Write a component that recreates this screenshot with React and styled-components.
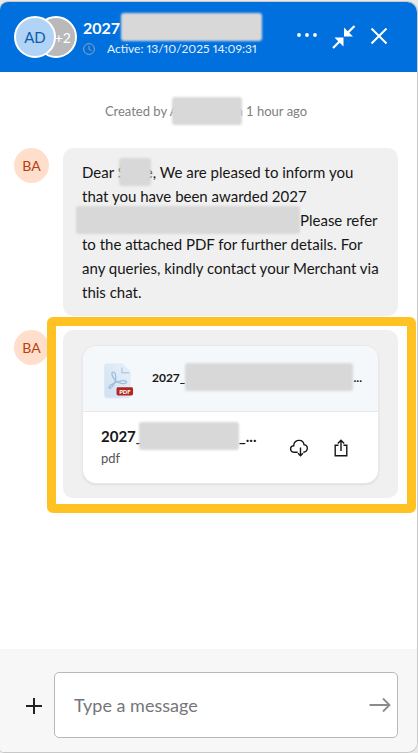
import React from 'react'
import { createGlobalStyle, styled } from 'styled-components'

const GlobalStyle = createGlobalStyle`
  * {
    box-sizing: border-box;
  }
  body {
    margin: 0;
    background: #e9e9e9;
    font-family: Lato, "Noto Sans", sans-serif;
    color: #161616;
  }
  button {
    display: flex;
    align-items: center;
    justify-content: center;
    padding: 0;
    border: 0;
    background: none;
    color: inherit;
    cursor: pointer;
  }
`;
const Panel = styled.main`
  display: flex;
  flex-direction: column;
  min-height: calc(100vh - 3px);
  margin: 2px 1px 1px 0;
  background: #fff;
  border-radius: 8px 10px 10px 4px;
  overflow: hidden;
  box-shadow: 0 0 0 1px #c8c8c8;
`;
const Header = styled.header`
  display: flex;
  align-items: center;
  height: 70px;
  padding: 0 29px 0 14px;
  background: #0070de;
  color: #fff;
`;
const AvatarGroup = styled.div`
  display: flex;
  margin-right: 6px;
`;
const GroupAvatar = styled.div`
  display: flex;
  align-items: center;
  justify-content: center;
  width: 42px;
  height: 42px;
  border: 2px solid #fff;
  border-radius: 50%;
  background: #b1d3f6;
  color: #0d5cab;
  font-size: 15px;
  z-index: 1;
`;
const MoreAvatar = styled(GroupAvatar)`
  justify-content: flex-end;
  margin-left: -21px;
  padding-right: 4px;
  background: #b9b9b9;
  color: #fff;
  font-size: 14px;
  z-index: 0;
`;
const HeaderText = styled.div`
  flex: 1;
  min-width: 0;
  padding-top: 3px;
  white-space: nowrap;
`;
const Title = styled.h1`
  margin: 0;
  font-size: 16px;
  line-height: 20px;
`;
const Status = styled.div`
  display: flex;
  align-items: center;
  gap: 12px;
  color: #e6f1fc;
  font-size: 12px;
  font-variant-numeric: proportional-nums;
  line-height: 20px;
  svg {
    color: #8fa3b8;
  }
`;
const HeaderActions = styled.div`
  display: flex;
  align-items: center;
  gap: 14px;
`;
const Redacted = styled.span`
  display: inline-block;
  width: ${({ $width }) => $width}px;
  height: 28px;
  margin: -6px ${({ $after }) => $after || 0}px -2px ${({ $before }) => $before || 0}px;
  border-radius: 3px;
  background: #d8d8d8;
  vertical-align: middle;
  filter: blur(1px);
`;
const Messages = styled.section`
  flex: 1;
  padding: 28px 19px 28px 14px;
`;
const Created = styled.p`
  margin: 0 0 25px;
  padding: 0 8px;
  color: #808080;
  font-size: 13px;
  line-height: 22px;
  text-align: center;
`;
const Message = styled.article`
  display: flex;
  align-items: flex-start;
  gap: 14px;
  margin-bottom: 14px;
`;
const Avatar = styled.div`
  display: flex;
  align-items: center;
  justify-content: center;
  flex: none;
  width: 35px;
  height: 35px;
  border-radius: 50%;
  background: #ffdfcc;
  color: #b8400e;
  font-size: 14px;
`;
const Bubble = styled.div`
  position: relative;
  flex: 1;
  min-width: 0;
  padding: ${({ $file }) => ($file ? '15px 19px 14px' : '12px 17px 12px 19px')};
  border-radius: 10px;
  background: #f0f0f0;
  font-size: 15px;
  line-height: 24px;
`;
const Highlight = styled.div`
  position: absolute;
  inset: -13px -18px -15px -16px;
  border: 9px solid #ffc222;
  border-radius: 6px;
  pointer-events: none;
`;
const FileCard = styled.div`
  border: 1px solid #e6e8ea;
  border-radius: 14px;
  background: #fff;
  overflow: hidden;
  box-shadow: 0 1px 2px rgba(0, 0, 0, 0.08);
`;
const FilePreview = styled.div`
  display: flex;
  align-items: center;
  gap: 18px;
  height: 66px;
  padding: 4px 16px 0 21px;
  border-bottom: 1px solid #e6e8ea;
  background: #f4f8fb;
  font-size: 12px;
  font-weight: bold;
  line-height: 20px;
  white-space: nowrap;
`;
const PreviewName = styled.div`
  padding-bottom: 4px;
`;
const FileRow = styled.div`
  display: flex;
  align-items: center;
  height: 71px;
  padding: 0 27px 0 18px;
`;
const FileInfo = styled.div`
  flex: 1;
  min-width: 0;
  padding-bottom: 4px;
  white-space: nowrap;
`;
const FileName = styled.div`
  font-size: 15px;
  font-weight: bold;
  line-height: 24px;
`;
const FileType = styled.div`
  color: #555;
  font-size: 13px;
  line-height: 20px;
`;
const FileActions = styled.div`
  display: flex;
  gap: 22px;
`;
const Composer = styled.form`
  display: flex;
  align-items: center;
  gap: 10px;
  padding: 23px 19px 14px 24px;
  background: #f7f7f7;
`;
const InputBox = styled.div`
  display: flex;
  align-items: center;
  flex: 1;
  min-width: 0;
  height: 66px;
  padding: 0 6px 0 19px;
  border: 1px solid #b8b8b8;
  border-radius: 5px;
  background: #fff;
  color: #8c8c8c;
`;
const MessageInput = styled.input`
  flex: 1;
  min-width: 0;
  padding: 0;
  border: 0;
  outline: 0;
  background: none;
  font: inherit;
  font-size: 18px;
  line-height: 24px;
  &::placeholder {
    color: #747678;
    opacity: 1;
  }
`;

const ClockIcon = () => (
  <svg width="12" height="12" viewBox="0 0 12 12" fill="none" stroke="currentColor">
    <circle cx="6" cy="6" r="5.4" />
    <path d="M6 2.8V6.4L8.4 7.6" />
  </svg>
)
const DotsIcon = () => (
  <svg width="22" height="22" viewBox="0 0 22 22" fill="currentColor">
    <circle cx="3" cy="9" r="1.9" />
    <circle cx="11" cy="9" r="1.9" />
    <circle cx="19" cy="9" r="1.9" />
  </svg>
)
const CollapseIcon = () => (
  <svg width="24" height="24" viewBox="0 0 24 24" fill="currentColor" stroke="currentColor">
    <path d="M22.5 1L15 8.5M1 23L8.5 15.5" fill="none" strokeWidth="2.2" />
    <path d="M12 2.5V11.5H21ZM11.5 21.5V12.5H2.5Z" stroke="none" />
  </svg>
)
const CloseIcon = () => (
  <svg width="18" height="18" viewBox="0 0 18 18" fill="none" stroke="currentColor" strokeWidth="2">
    <path d="M1.5 0.5L16.5 15.5M16.5 0.5L1.5 15.5" />
  </svg>
)
const PdfIcon = () => (
  <svg width="31" height="36" viewBox="0 0 31 36">
    <defs>
      <linearGradient id="sheet" x1="0" y1="1" x2="1" y2="0">
        <stop offset="0" stopColor="#cfe0f1" />
        <stop offset="1" stopColor="#e8f1fa" />
      </linearGradient>
    </defs>
    <path d="M3 0.5H19L27 8.5V33Q27 35.5 24.5 35.5H3Q0.5 35.5 0.5 33V3Q0.5 0.5 3 0.5Z" fill="url(#sheet)" stroke="#dce9f5" />
    <path d="M18.5 4V9.5H26" fill="none" stroke="#b3cde6" strokeWidth="1.4" />
    <path
      d="M9 9C7 10 9 14.5 12 17.5C15 20.5 21 21.5 23 19.8C24.8 17.8 20 17 15.5 18.5C10 20 5 22.8 5.2 25.2C6 27.5 10.5 22.5 11.8 17.5C12.9 13 11.5 8 9 9Z"
      fill="none"
      stroke="#9dbddb"
      strokeWidth="1.3"
    />
    <rect x="13" y="24.5" width="17" height="8.5" rx="1.5" fill="#b3261e" />
    <text x="21.5" y="31" fill="#fff" fontFamily="Lato, sans-serif" fontSize="6" fontWeight="900" textAnchor="middle">PDF</text>
  </svg>
)
const CloudIcon = () => (
  <svg width="20" height="20" viewBox="0 0 20 20" fill="none" stroke="currentColor" strokeWidth="1.4">
    <path d="M8.7 14.3H5.4C0.6 14.2 0.4 8.4 4.7 7.8C5 1.2 14 0.4 15 6.6C19.6 7.4 19.4 13.6 14.3 14.3" />
    <path d="M11.5 9.5V17.5M9 15.2L11.5 17.7L14 15.2" />
  </svg>
)
const ShareIcon = () => (
  <svg width="20" height="20" viewBox="0 0 20 20" fill="none" stroke="currentColor" strokeWidth="1.4">
    <path d="M7.5 7.2H4.2V17.8H15.8V7.2H12.5" />
    <path d="M10 13V2.5M6.8 5.4L10 2.2L13.2 5.4" />
  </svg>
)
const PlusIcon = () => (
  <svg width="20" height="20" viewBox="0 0 20 20" fill="none" stroke="#222" strokeWidth="2">
    <path d="M10 3V19M2 11H18" />
  </svg>
)
const SendIcon = () => (
  <svg width="22" height="16" viewBox="0 0 22 16" fill="none" stroke="currentColor" strokeWidth="1.8">
    <path d="M0.5 8H20.5M14 1.5L20.5 8L14 14.5" />
  </svg>
)

const App = () => {
  return (
    <>
      <GlobalStyle />
      <Panel>
        <Header>
          <AvatarGroup>
            <GroupAvatar>AD</GroupAvatar>
            <MoreAvatar>+2</MoreAvatar>
          </AvatarGroup>
          <HeaderText>
            <Title>2027 <Redacted $width={141} $before={-3} /></Title>
            <Status><ClockIcon />Active: 13/10/2025 14:09:31</Status>
          </HeaderText>
          <HeaderActions>
            <button type="button" aria-label="More options"><DotsIcon /></button>
            <button type="button" aria-label="Collapse"><CollapseIcon /></button>
            <button type="button" aria-label="Close"><CloseIcon /></button>
          </HeaderActions>
        </Header>
        <Messages>
          <Created>Created by A<Redacted $width={70} $before={-7} $after={-6} />n 1 hour ago</Created>
          <Message>
            <Avatar>BA</Avatar>
            <Bubble>
              Dear S<Redacted $width={32} $before={-7} $after={-6} />e, We are pleased to inform you
              that you have been awarded 2027
              {' '}<Redacted $width={224} $before={-6} />Please refer
              to the attached PDF for further details. For
              any queries, kindly contact your Merchant via
              this chat.
            </Bubble>
          </Message>
          <Message>
            <Avatar>BA</Avatar>
            <Bubble $file>
              <FileCard>
                <FilePreview>
                  <PdfIcon />
                  <PreviewName>2027_<Redacted $width={168} />...</PreviewName>
                </FilePreview>
                <FileRow>
                  <FileInfo>
                    <FileName>2027_<Redacted $width={100} $before={-4} />_...</FileName>
                    <FileType>pdf</FileType>
                  </FileInfo>
                  <FileActions>
                    <button type="button" aria-label="Download"><CloudIcon /></button>
                    <button type="button" aria-label="Share"><ShareIcon /></button>
                  </FileActions>
                </FileRow>
              </FileCard>
              <Highlight />
            </Bubble>
          </Message>
        </Messages>
        <Composer onSubmit={(e) => e.preventDefault()}>
          <button type="button" aria-label="Add attachment"><PlusIcon /></button>
          <InputBox>
            <MessageInput type="text" aria-label="Message" placeholder="Type a message" />
            <button type="submit" aria-label="Send"><SendIcon /></button>
          </InputBox>
        </Composer>
      </Panel>
    </>
  )
}

export default App
